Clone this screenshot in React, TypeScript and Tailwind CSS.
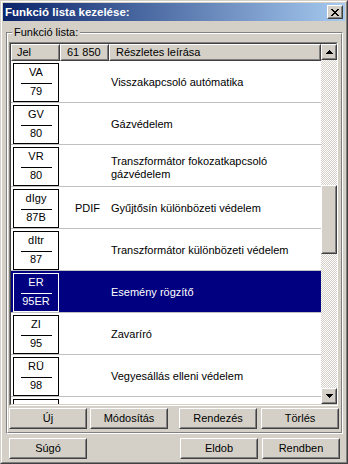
import React from "react";

type Row = { top: string; bottom: string; code: string; desc: React.ReactNode; selected?: boolean; two?: boolean };

const rows: Row[] = [
  { top: "VA", bottom: "79", code: "", desc: "Visszakapcsoló autómatika" },
  { top: "GV", bottom: "80", code: "", desc: "Gázvédelem" },
  {
    top: "VR",
    bottom: "80",
    code: "",
    two: true,
    desc: (
      <>
        Transzformátor fokozatkapcsoló
        <br />
        gázvédelem
      </>
    ),
  },
  { top: "dIgy", bottom: "87B", code: "PDIF", desc: "Gyűjtősín különbözeti védelem" },
  { top: "dItr", bottom: "87", code: "", desc: "Transzformátor különbözeti védelem" },
  { top: "ER", bottom: "95ER", code: "", desc: "Esemény rögzítő", selected: true },
  { top: "ZI", bottom: "95", code: "", desc: "Zavaríró" },
  { top: "RÜ", bottom: "98", code: "", desc: "Vegyesállás elleni védelem" },
  { top: "", bottom: "", code: "", desc: "" },
];

function Raised({
  className,
  innerClassName,
  children,
}: {
  className: string;
  innerClassName: string;
  children?: React.ReactNode;
}) {
  return (
    <div
      className={`border border-t-white border-l-white border-r-[#404040] border-b-[#404040] ${className}`}
    >
      <div
        className={`h-full w-full border border-t-[#d4d0c8] border-l-[#d4d0c8] border-r-[#808080] border-b-[#808080] bg-[#d4d0c8] ${innerClassName}`}
      >
        {children}
      </div>
    </div>
  );
}

function Button({ label }: { label: string }) {
  return (
    <Raised className="w-[78px] h-[21px]" innerClassName="flex items-center justify-center text-[11px] leading-[13px] text-black">
      {label}
    </Raised>
  );
}

function CloseGlyph() {
  return (
    <svg width="8" height="7" viewBox="0 0 8 7" shapeRendering="crispEdges">
      <path
        d="M0 0h2v1H0zM6 0h2v1H6zM1 1h2v1H1zM5 1h2v1H5zM2 2h4v1H2zM3 3h2v1H3zM2 4h4v1H2zM1 5h2v1H1zM5 5h2v1H5zM0 6h2v1H0zM6 6h2v1H6z"
        fill="#000"
      />
    </svg>
  );
}

function Arrow({ up }: { up: boolean }) {
  return (
    <svg width="7" height="4" viewBox="0 0 7 4" shapeRendering="crispEdges">
      <path
        d={up ? "M3 0h1v1H3zM2 1h3v1H2zM1 2h5v1H1zM0 3h7v1H0z" : "M0 0h7v1H0zM1 1h5v1H1zM2 2h3v1H2zM3 3h1v1H3z"}
        fill="#000"
      />
    </svg>
  );
}

export default function App() {
  return (
    <div className="w-[348px] h-[464px] border border-t-[#d4d0c8] border-l-[#d4d0c8] border-r-[#404040] border-b-[#404040] font-['Liberation_Sans',Arial,sans-serif] text-black">
      <div className="h-full border border-t-white border-l-white border-r-[#808080] border-b-[#808080] bg-[#d4d0c8] p-[1px] flex flex-col">
        {/* Title bar */}
        <div className="h-[18px] flex items-center justify-between bg-[image:linear-gradient(to_right,#0a246a,#a6caf0)] pl-[2px] pr-[2px] shrink-0">
          <span className="text-white font-bold text-[11.5px] leading-[14px]">Funkció lista kezelése:</span>
          <Raised className="w-[16px] h-[14px]" innerClassName="flex items-center justify-center">
            <CloseGlyph />
          </Raised>
        </div>

        {/* Group box */}
        <div className="relative mt-[11px] ml-[3px] mr-[2px] h-[402px] border border-t-[#808080] border-l-[#808080] border-r-white border-b-white shrink-0">
          <div className="h-full border border-t-white border-l-white border-r-[#808080] border-b-[#808080] pt-[8px] pl-[1px] pr-[1px] pb-[3px] flex flex-col">
            <span className="absolute top-[-7px] left-[5px] bg-[#d4d0c8] px-[2px] text-[11px] leading-[13px]">
              Funkció lista:
            </span>

            {/* List box */}
            <div className="w-[329px] h-[364px] border border-t-[#808080] border-l-[#808080] border-r-white border-b-white">
              <div className="h-full border border-t-[#404040] border-l-[#404040] border-r-[#d4d0c8] border-b-[#d4d0c8] flex">
                <div className="w-[310px] flex flex-col bg-white">
                  {/* header */}
                  <div className="h-[17px] flex shrink-0 text-[11px] leading-[13px]">
                    <Raised className="w-[49px] h-[17px]" innerClassName="flex items-center pl-[4px]">
                      Jel
                    </Raised>
                    <Raised className="w-[49px] h-[17px]" innerClassName="flex items-center pl-[5px]">
                      61 850
                    </Raised>
                    <Raised className="w-[212px] h-[17px]" innerClassName="flex items-center pl-[5px]">
                      Részletes leírása
                    </Raised>
                  </div>
                  {/* rows */}
                  <div className="flex-1 overflow-hidden flex flex-col">
                    {rows.map((r, i) => (
                      <div
                        key={i}
                        className={`h-[42px] shrink-0 flex border-b border-b-[#c0c0c0] text-[11px] leading-[13px] ${
                          r.selected ? "bg-[#000080] text-white" : "bg-white text-black"
                        }`}
                      >
                        <div className="w-[49px] pl-[2px] pt-[2px] shrink-0">
                          <div
                            className={`w-[46px] h-[39px] border flex flex-col items-center pt-[2px] ${
                              r.selected ? "border-white" : "border-black"
                            }`}
                          >
                            <div className="h-[13px]">{r.top}</div>
                            <div className={`mt-[4px] w-[31px] h-px ${r.selected ? "bg-white" : "bg-black"}`} />
                            <div className="mt-[1px] h-[13px]">{r.bottom}</div>
                          </div>
                        </div>
                        <div className="w-[49px] shrink-0 flex items-center pl-[15px] pt-[1px]">{r.code}</div>
                        <div className={`flex-1 flex items-center pl-[2px] ${r.two ? "pt-[4px]" : "pt-[1px]"}`}>{r.desc}</div>
                      </div>
                    ))}
                  </div>
                </div>
                {/* scrollbar */}
                <div className="w-[16px] flex flex-col">
                  <Raised className="w-[16px] h-[16px] shrink-0" innerClassName="flex items-center justify-center">
                    <Arrow up />
                  </Raised>
                  <div className="flex-1 bg-[image:repeating-conic-gradient(#ffffff_0%_25%,#d4d0c8_0%_50%)] bg-[length:2px_2px]">
                    <Raised className="mt-[125px] w-[16px] h-[69px]" innerClassName="" />
                  </div>
                  <Raised className="w-[16px] h-[16px] shrink-0" innerClassName="flex items-center justify-center">
                    <Arrow up={false} />
                  </Raised>
                </div>
              </div>
            </div>

            {/* group buttons */}
            <div className="mt-[2px] flex justify-between pr-[1px]">
              <div className="flex gap-[3px]">
                <Button label="Új" />
                <Button label="Módosítás" />
              </div>
              <div className="flex gap-[4px]">
                <Button label="Rendezés" />
                <Button label="Törlés" />
              </div>
            </div>
          </div>
        </div>

        {/* bottom buttons */}
        <div className="mt-[4px] flex justify-between pl-[6px] pr-[5px]">
          <Button label="Súgó" />
          <div className="flex gap-[4px]">
            <Button label="Eldob" />
            <Button label="Rendben" />
          </div>
        </div>
      </div>
    </div>
  );
}
